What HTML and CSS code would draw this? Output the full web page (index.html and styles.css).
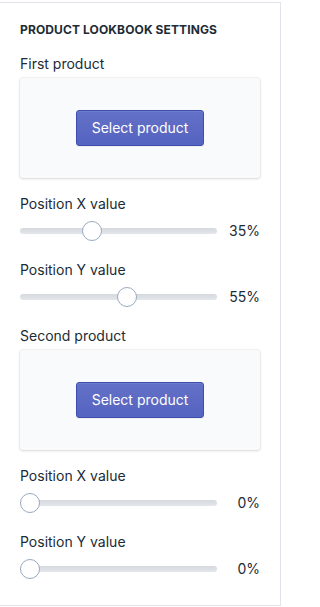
FILE: index.html
```html
<!DOCTYPE html>
<html lang="en">
<head>
<meta charset="utf-8">
<title>Product lookbook settings</title>
<link rel="stylesheet" href="styles.css">
</head>
<body>
<div class="panel">
  <h2 class="heading">Product lookbook settings</h2>

  <div class="field">
    <div class="label">First product</div>
    <div class="card"><button class="btn">Select product</button></div>
  </div>

  <div class="field">
    <div class="label">Position X value</div>
    <div class="range">
      <div class="track"><div class="thumb-area"><span class="thumb" style="left: 35%"></span></div></div>
      <div class="value">35%</div>
    </div>
  </div>

  <div class="field">
    <div class="label">Position Y value</div>
    <div class="range">
      <div class="track"><div class="thumb-area"><span class="thumb" style="left: 55%"></span></div></div>
      <div class="value">55%</div>
    </div>
  </div>

  <div class="field">
    <div class="label">Second product</div>
    <div class="card"><button class="btn">Select product</button></div>
  </div>

  <div class="field">
    <div class="label">Position X value</div>
    <div class="range">
      <div class="track"><div class="thumb-area"><span class="thumb" style="left: 0%"></span></div></div>
      <div class="value">0%</div>
    </div>
  </div>

  <div class="field">
    <div class="label">Position Y value</div>
    <div class="range">
      <div class="track"><div class="thumb-area"><span class="thumb" style="left: 0%"></span></div></div>
      <div class="value">0%</div>
    </div>
  </div>
</div>
</body>
</html>
```

FILE: styles.css
```css
html, body {
  margin: 0;
  padding: 0;
  background: #ffffff;
}
body {
  font-family: Inter, "Noto Sans", "Liberation Sans", sans-serif;
  color: #212b36;
  -webkit-font-smoothing: antialiased;
}
.panel {
  box-sizing: border-box;
  width: 281px;
  height: 604px;
  margin-top: 2px;
  border-top: 1px solid #e3e2ea;
  border-right: 1px solid #e3e2ea;
  border-bottom: 1px solid #e3e2ea;
  padding: 19px 20px 0 20px;
  display: flex;
  flex-direction: column;
  gap: 16px;
}
.heading {
  margin: 0;
  font-size: 12px;
  line-height: 16px;
  font-weight: 700;
  text-transform: uppercase;
  letter-spacing: 0.01em;
  color: #212b36;
}
.field {
  display: flex;
  flex-direction: column;
  gap: 4px;
}
.label {
  font-size: 14px;
  line-height: 20px;
  color: #212b36;
}
.card {
  height: 100px;
  background: #f9fafb;
  border-radius: 3px;
  box-shadow: 0 0 0 1px rgba(63, 63, 68, 0.05), 0 1px 3px 0 rgba(63, 63, 68, 0.15);
  display: flex;
  align-items: center;
  justify-content: center;
}
.btn {
  box-sizing: border-box;
  width: 128px;
  height: 36px;
  border: 1px solid #3f4eae;
  border-radius: 3px;
  background: linear-gradient(180deg, #6371c7, #5563c1);
  box-shadow: inset 0 1px 0 0 #6f7bcb, 0 1px 0 0 rgba(22, 29, 37, 0.05);
  color: #ffffff;
  font-family: inherit;
  font-size: 14px;
  line-height: 16px;
  padding: 0;
  cursor: pointer;
}
.range {
  height: 26px;
  display: flex;
  align-items: center;
}
.track {
  position: relative;
  width: 197px;
  height: 6px;
  border-radius: 3px;
  background: linear-gradient(180deg, #d5d9de, #e3e6ea);
}
.thumb-area {
  position: absolute;
  top: 0;
  bottom: 0;
  left: 0;
  right: 20px;
}
.thumb {
  position: absolute;
  top: 50%;
  box-sizing: border-box;
  width: 20px;
  height: 20px;
  margin-top: -10px;
  border-radius: 50%;
  background: #ffffff;
  border: 1px solid #9aaac0;
}
.value {
  flex: 1;
  text-align: right;
  font-size: 14px;
  line-height: 20px;
  color: #212b36;
}
```
